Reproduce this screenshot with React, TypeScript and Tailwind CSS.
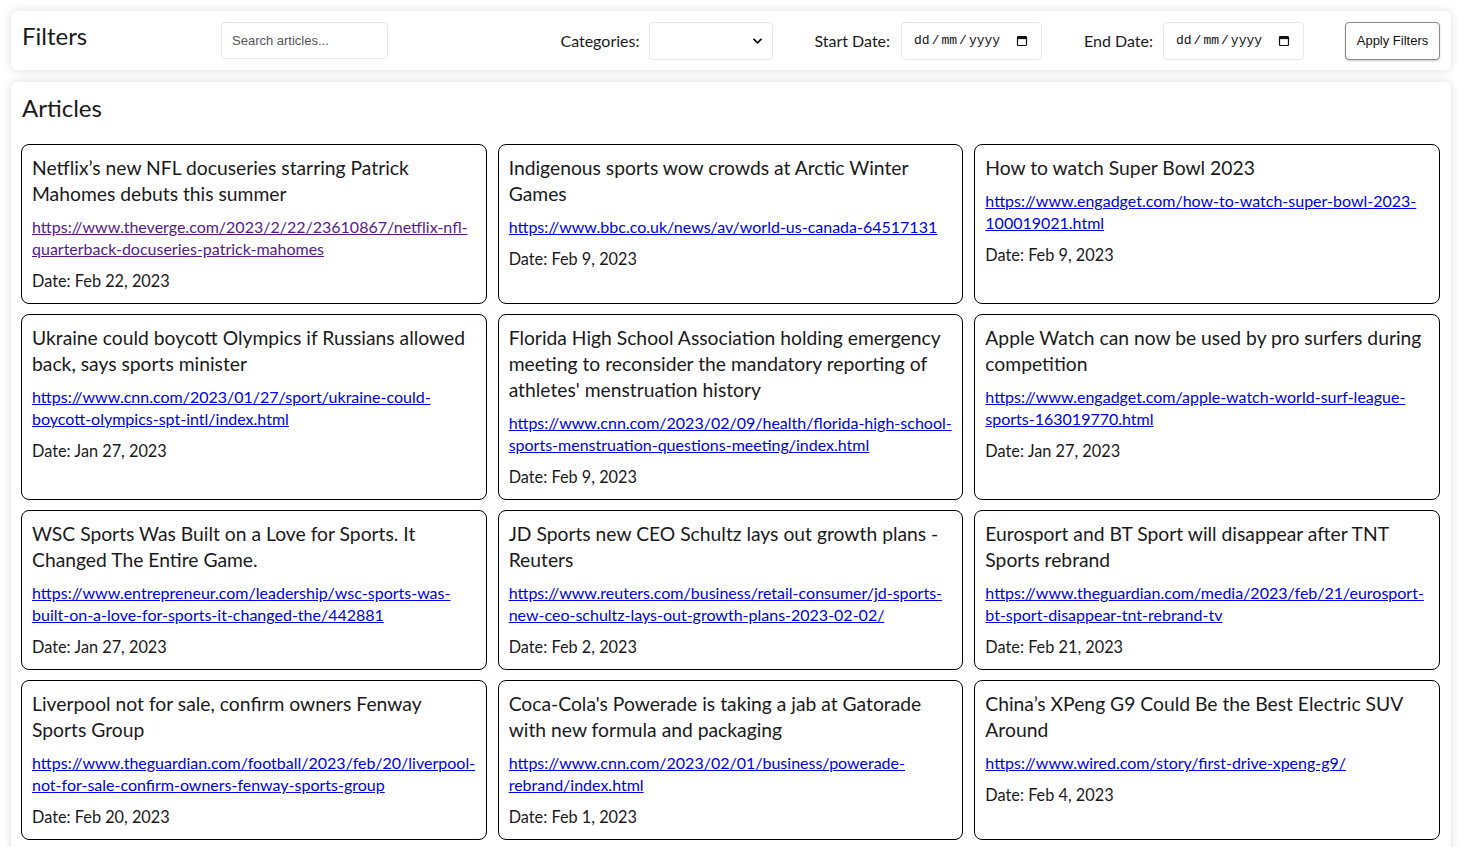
import React from 'react'

type Article = {
  title: string
  url: string
  date: string
  visited?: boolean
}

const ARTICLES: Article[] = [
  {
    title: 'Netflix’s new NFL docuseries starring Patrick Mahomes debuts this summer',
    url: 'https://www.theverge.com/2023/2/22/23610867/netflix-nfl-quarterback-docuseries-patrick-mahomes',
    date: 'Feb 22, 2023',
    visited: true,
  },
  {
    title: 'Indigenous sports wow crowds at Arctic Winter Games',
    url: 'https://www.bbc.co.uk/news/av/world-us-canada-64517131',
    date: 'Feb 9, 2023',
  },
  {
    title: 'How to watch Super Bowl 2023',
    url: 'https://www.engadget.com/how-to-watch-super-bowl-2023-100019021.html',
    date: 'Feb 9, 2023',
  },
  {
    title: 'Ukraine could boycott Olympics if Russians allowed back, says sports minister',
    url: 'https://www.cnn.com/2023/01/27/sport/ukraine-could-boycott-olympics-spt-intl/index.html',
    date: 'Jan 27, 2023',
  },
  {
    title:
      "Florida High School Association holding emergency meeting to reconsider the mandatory reporting of athletes' menstruation history",
    url: 'https://www.cnn.com/2023/02/09/health/florida-high-school-sports-menstruation-questions-meeting/index.html',
    date: 'Feb 9, 2023',
  },
  {
    title: 'Apple Watch can now be used by pro surfers during competition',
    url: 'https://www.engadget.com/apple-watch-world-surf-league-sports-163019770.html',
    date: 'Jan 27, 2023',
  },
  {
    title: 'WSC Sports Was Built on a Love for Sports. It Changed The Entire Game.',
    url: 'https://www.entrepreneur.com/leadership/wsc-sports-was-built-on-a-love-for-sports-it-changed-the/442881',
    date: 'Jan 27, 2023',
  },
  {
    title: 'JD Sports new CEO Schultz lays out growth plans - Reuters',
    url: 'https://www.reuters.com/business/retail-consumer/jd-sports-new-ceo-schultz-lays-out-growth-plans-2023-02-02/',
    date: 'Feb 2, 2023',
  },
  {
    title: 'Eurosport and BT Sport will disappear after TNT Sports rebrand',
    url: 'https://www.theguardian.com/media/2023/feb/21/eurosport-bt-sport-disappear-tnt-rebrand-tv',
    date: 'Feb 21, 2023',
  },
  {
    title: 'Liverpool not for sale, confirm owners Fenway Sports Group',
    url: 'https://www.theguardian.com/football/2023/feb/20/liverpool-not-for-sale-confirm-owners-fenway-sports-group',
    date: 'Feb 20, 2023',
  },
  {
    title: "Coca-Cola's Powerade is taking a jab at Gatorade with new formula and packaging",
    url: 'https://www.cnn.com/2023/02/01/business/powerade-rebrand/index.html',
    date: 'Feb 1, 2023',
  },
  {
    title: 'China’s XPeng G9 Could Be the Best Electric SUV Around',
    url: 'https://www.wired.com/story/first-drive-xpeng-g9/',
    date: 'Feb 4, 2023',
  },
]

function CalendarIcon() {
  return (
    <svg width="12" height="12" viewBox="0 0 12 12" className="shrink-0">
      <rect x="1.5" y="1.5" width="9" height="9" rx="1" fill="none" stroke="#111" strokeWidth="1.2" />
      <rect x="1.5" y="1.5" width="9" height="2.6" fill="#111" />
    </svg>
  )
}

function DateField() {
  return (
    <div className="flex h-[38px] w-[141px] items-center justify-between rounded border border-[#e8e8e8] bg-white pl-[12px] pr-[13px]">
      <span className="flex gap-[2px] font-['Liberation_Mono',monospace] text-[13px] text-[#111]">
        <span>dd</span>
        <span>/</span>
        <span>mm</span>
        <span>/</span>
        <span>yyyy</span>
      </span>
      <CalendarIcon />
    </div>
  )
}

export default function App() {
  return (
    <div className="min-h-screen bg-white p-[11px] font-['Lato',sans-serif] text-[#1a1a1a]">
      <div className="flex h-[59px] items-center rounded-md bg-white px-[11px] shadow-[0_0_10px_rgba(0,0,0,0.14)]">
        <h2 className="mb-[9px] w-[199px] text-[24px] leading-none">Filters</h2>
        <div className="flex h-[37px] w-[167px] items-center rounded border border-[#e8e8e8] px-[10px] font-['Liberation_Sans',sans-serif] text-[13px] text-[#555]">
          Search articles...
        </div>

        <div className="ml-auto flex items-center">
          <span className="text-[16px]">Categories:</span>
          <div className="ml-[10px] flex h-[38px] w-[124px] items-center justify-end rounded border border-[#e8e8e8] pr-[9px]">
            <svg width="11" height="8" viewBox="0 0 11 8">
              <path d="M1.5 1.8 L5.5 5.8 L9.5 1.8" fill="none" stroke="#111" strokeWidth="1.8" />
            </svg>
          </div>

          <span className="ml-[41px] text-[16px]">Start Date:</span>
          <div className="ml-[11px]">
            <DateField />
          </div>

          <span className="ml-[42px] text-[16px]">End Date:</span>
          <div className="ml-[10px]">
            <DateField />
          </div>

          <button className="ml-[41px] h-[38px] w-[95px] rounded border border-[#8a8a8a] bg-white font-['Liberation_Sans',sans-serif] text-[13px] text-[#111] shadow-[0_1px_2px_rgba(0,0,0,0.2)]">
            Apply Filters
          </button>
        </div>
      </div>

      <div className="mt-[12px] rounded-md bg-white pb-[11px] pl-[10px] pr-[11px] pt-[12px] shadow-[0_0_10px_rgba(0,0,0,0.14)]">
        <h2 className="pl-px text-[24px] leading-[28px]">Articles</h2>

        <div className="mt-[22px] grid grid-cols-3 gap-x-[11px] gap-y-[10px]">
          {ARTICLES.map((article) => (
            <div key={article.url} className="flex flex-col gap-[9px] rounded-lg border border-black px-[10px] pb-[10px] pt-[10px]">
              <h3 className="text-[19.3px] leading-[26px]">{article.title}</h3>
              <a
                href="#"
                className={`break-words text-[16px] leading-[22px] underline ${
                  article.visited ? 'text-[#551a8b]' : 'text-[#0000ee]'
                }`}
              >
                {article.url}
              </a>
              <p className="text-[16.3px] leading-[24px]">Date: {article.date}</p>
            </div>
          ))}
        </div>
      </div>
    </div>
  )
}
